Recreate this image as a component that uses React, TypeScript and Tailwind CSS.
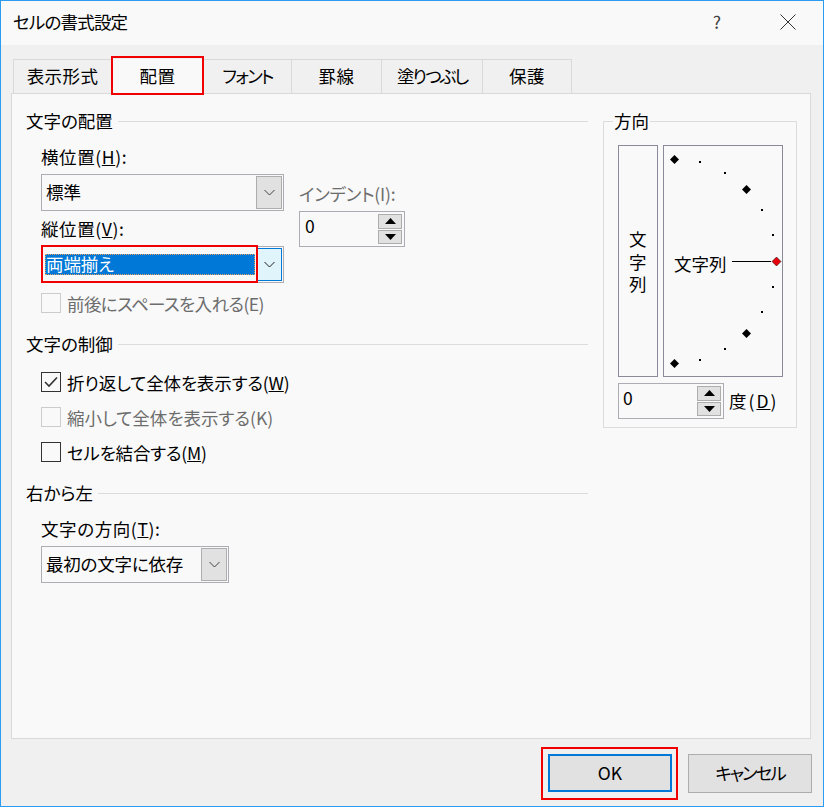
import React from "react";

const dither = "bg-[#e1e1e1] bg-[radial-gradient(#cfcfcf_0.6px,transparent_0.7px)] bg-[length:4px_4px]";

function Chevron({ color = "#404040" }: { color?: string }) {
  return (
    <svg width="11" height="7" viewBox="0 0 11 7" fill="none">
      <path d="M0.5 1 L5.5 6 L10.5 1" stroke={color} strokeWidth="1" />
    </svg>
  );
}

function Legend({ text }: { text: string }) {
  return (
    <div className="flex items-center h-5 gap-[5px]">
      <span className="leading-5 pb-[2px]">{text}</span>
      <div className="flex-1 h-px bg-[#dcdcdc] -mt-[1px]" />
    </div>
  );
}

function Combo({ text, width, track = "" }: { text: string; width: string; track?: string }) {
  return (
    <div className={`${width} h-[37px] border border-[#abadb3] bg-[#f9f9f9] flex items-stretch p-px`}>
      <div className={`flex-1 pl-[3px] pb-[2px] flex items-center leading-5 ${track}`}>{text}</div>
      <div className={`w-[26px] border border-[#adadad] ${dither} flex items-center justify-center`}>
        <Chevron />
      </div>
    </div>
  );
}

function Spinner({ pad }: { pad: string }) {
  return (
    <div className="w-[106px] h-9 border border-[#abadb3] bg-[#f9f9f9] flex items-stretch py-[2px] pr-[2px]">
      <div className={`flex-1 ${pad} pb-[7px] flex items-center leading-5`}>0</div>
      <div className="w-6 flex flex-col gap-px">
        <div className={`flex-1 border border-[#adadad] ${dither} flex items-center justify-center`}>
          <svg width="11" height="6" viewBox="0 0 11 6"><path d="M5.5 0 L11 6 L0 6 Z" fill="#000" /></svg>
        </div>
        <div className={`flex-1 border border-[#adadad] ${dither} flex items-center justify-center`}>
          <svg width="11" height="6" viewBox="0 0 11 6"><path d="M0 0 L11 0 L5.5 6 Z" fill="#000" /></svg>
        </div>
      </div>
    </div>
  );
}

function Check({ label, checked, disabled, mt, track = "" }: { label: React.ReactNode; checked?: boolean; disabled?: boolean; mt: string; track?: string }) {
  return (
    <div className={`${mt} ml-[15px] flex items-center h-5 gap-[6px] ${disabled ? "text-[#6d6d6d]" : ""}`}>
      <div className={`w-5 h-5 border bg-[#f9f9f9] flex items-center justify-center ${disabled ? "border-[#cccccc]" : "border-[#333333]"}`}>
        {checked && (
          <svg width="14" height="12" viewBox="0 0 14 12" fill="none">
            <path d="M1 6 L5 10 L13 1.5" stroke="#333" strokeWidth="1.6" />
          </svg>
        )}
      </div>
      <span className={`leading-5 pt-[2px] ${track}`}>{label}</span>
    </div>
  );
}

function Orientation() {
  const big: [number, number][] = [[10.5, 13.5], [82.5, 43.5], [82.5, 187.5], [10.5, 217.5]];
  const small: [number, number][] = [[36, 16], [61, 27], [98, 64], [109, 89], [109, 141], [98, 166], [61, 203], [36, 214]];
  return (
    <svg width="118" height="230" viewBox="0 0 118 230" className="absolute inset-0">
      {big.map(([x, y]) => (
        <path key={`${x}-${y}`} d={`M${x} ${y - 4.5} L${x + 4.5} ${y} L${x} ${y + 4.5} L${x - 4.5} ${y} Z`} fill="#000" />
      ))}
      {small.map(([x, y]) => (
        <rect key={`${x}-${y}`} x={x - 1} y={y - 1} width="2" height="2" fill="#000" />
      ))}
      <line x1="68" y1="115.5" x2="107" y2="115.5" stroke="#000" />
      <path d="M112.5 111 L117 115.5 L112.5 120 L108 115.5 Z" fill="#e8000d" stroke="#000" strokeWidth="0.5" />
    </svg>
  );
}

const tabText = "flex items-center justify-center leading-5 pb-[2px]";

export default function App() {
  return (
    <div className="w-[824px] h-[807px] border border-[#2b9cf2] bg-[#f0f0f0] flex flex-col overflow-hidden text-[17.5px] text-black [font-family:'Noto_Sans_CJK_JP','Noto_Sans',sans-serif] [font-feature-settings:'palt']">
      {/* title bar */}
      <div className="h-[44px] shrink-0 bg-[#f9f9f9] flex items-center pl-[12px]">
        <span className="flex-1 leading-5 -mt-[3px] tracking-[-0.8px]">セルの書式設定</span>
        <span className="w-4 text-center text-[#404040] mr-[55px] -mt-[2px]">?</span>
        <svg width="16" height="16" viewBox="0 0 16 16" className="mr-[27px] -mt-[3px]">
          <path d="M0.5 0.5 L15.5 15.5 M15.5 0.5 L0.5 15.5" stroke="#333" strokeWidth="1" fill="none" />
        </svg>
      </div>

      {/* tabs */}
      <div className="mt-[14px] ml-[12px] flex h-[34px] shrink-0 items-start">
        <div className={`w-[98px] h-[34px] border-t border-l border-[#d9d9d9] tracking-[0.4px] ${tabText}`}>表示形式</div>
        <div className={`relative z-10 w-[93px] h-[35px] bg-[#f9f9f9] tracking-[0.4px] ${tabText}`}>
          配置
          <div className="absolute left-0 right-0 -top-[3px] -bottom-[1px] border-2 border-[#f00000]" />
        </div>
        <div className={`w-[88px] h-[34px] border-t border-r border-[#d9d9d9] tracking-[-1.7px] ${tabText}`}>フォント</div>
        <div className={`w-[90px] h-[34px] border-t border-r border-[#d9d9d9] tracking-[0.4px] ${tabText}`}>罫線</div>
        <div className={`w-[101px] h-[34px] border-t border-r border-[#d9d9d9] tracking-[-2px] ${tabText}`}>塗りつぶし</div>
        <div className={`w-[89px] h-[34px] border-t border-r border-[#d9d9d9] tracking-[0.4px] ${tabText}`}>保護</div>
      </div>

      {/* panel */}
      <div className="ml-[10px] w-[800px] h-[646px] shrink-0 border border-[#d9d9d9] bg-[#f9f9f9] pl-[14px] pt-[18px] flex items-start gap-[15px]">
        {/* left column */}
        <div className="w-[562px] flex flex-col">
          <Legend text="文字の配置" />

          <div className="mt-4 ml-[15px] flex gap-[15px]">
            <div className="w-[243px] relative">
              <div className="h-5 leading-[18px] tracking-[0.6px]">横位置(<span className="underline">H</span>):</div>
              <div className="mt-[6px]"><Combo text="標準" width="w-[243px]" /></div>
              <div className="mt-[9px] h-5 leading-[18px] tracking-[0.6px]">縦位置(<span className="underline">V</span>):</div>
              <div className="mt-[6px] relative h-[37px] border border-[#abadb3] flex items-stretch p-px">
                <div className="flex-1 py-[6px] pl-[2px] pr-0">
                  <div className="h-full bg-[#0078d7] text-white outline outline-1 outline-dotted outline-[#e0a060] -outline-offset-1 pl-[1px] pb-[2px] flex items-center leading-5 tracking-[-0.1px]">両端揃え</div>
                </div>
                <div className="w-[25px] ml-[2px] border border-[#0078d7] bg-[#e0f4fb] flex items-center justify-center">
                  <Chevron color="#202020" />
                </div>
                <div className="absolute -left-px -top-[2px] w-[217px] h-[38px] border-2 border-[#f00000]" />
              </div>
            </div>
            <div className="w-[106px] pt-[37px]">
              <div className="h-5 leading-[18px] text-[#6d6d6d] whitespace-nowrap tracking-[-0.2px]">インデント(I):</div>
              <div className="mt-[6px]"><Spinner pad="pl-[5px]" /></div>
            </div>
          </div>

          <Check mt="mt-[10px]" disabled track="tracking-[-0.6px]" label="前後にスペースを入れる(E)" />

          <div className="mt-[22px]"><Legend text="文字の制御" /></div>
          <Check mt="mt-[17px]" checked track="tracking-[-0.15px]" label={<>折り返して全体を表示する(<span className="underline">W</span>)</>} />
          <Check mt="mt-[15px]" disabled label="縮小して全体を表示する(K)" />
          <Check mt="mt-[15px]" track="tracking-[-0.2px]" label={<>セルを結合する(<span className="underline">M</span>)</>} />

          <div className="mt-[22px]"><Legend text="右から左" /></div>
          <div className="mt-4 ml-[15px] h-5 leading-[18px] tracking-[0.6px]">文字の方向(<span className="underline">T</span>):</div>
          <div className="mt-[6px] ml-[15px]"><Combo text="最初の文字に依存" width="w-[188px]" track="tracking-[-0.2px]" /></div>
        </div>

        {/* right column */}
        <div className="relative mt-[9px] w-[194px] h-[307px] border border-[#dcdcdc] pl-[14px] pt-[23px]">
          <div className="absolute left-[9px] -top-[10px] h-5 px-px bg-[#f9f9f9] leading-[18px]">方向</div>
          <div className="flex gap-[5px]">
            <div className="w-10 h-[232px] border border-[#8a8a9a] flex items-center justify-center pt-[8px] pr-[2px]">
              <span className="[writing-mode:vertical-rl] tracking-[5px] [font-feature-settings:normal]">文字列</span>
            </div>
            <div className="relative w-[120px] h-[232px] border border-[#8a8a9a]">
              <Orientation />
              <span className="absolute left-[10px] top-[108px] leading-5">文字列</span>
            </div>
          </div>
          <div className="mt-[6px] flex items-center gap-[5px]">
            <Spinner pad="pl-[4px]" />
            <span className="leading-5 tracking-[2px]">度(<span className="underline">D</span>)</span>
          </div>
        </div>
      </div>

      {/* footer */}
      <div className="mt-[15px] mr-[11px] flex justify-end items-start gap-4">
        <div className="relative w-[124px] h-[38px] border-2 border-[#0078d7] bg-[#e1e1e1] flex items-center justify-center leading-5">
          OK
          <div className="absolute -left-[9px] -right-[8px] -top-[9px] -bottom-[10px] border-2 border-[#f00000]" />
        </div>
        <div className="w-[124px] h-[39px] border border-[#adadad] bg-[#e1e1e1] flex items-center justify-center leading-5 pb-[2px] tracking-[-2px]">キャンセル</div>
      </div>
    </div>
  );
}
